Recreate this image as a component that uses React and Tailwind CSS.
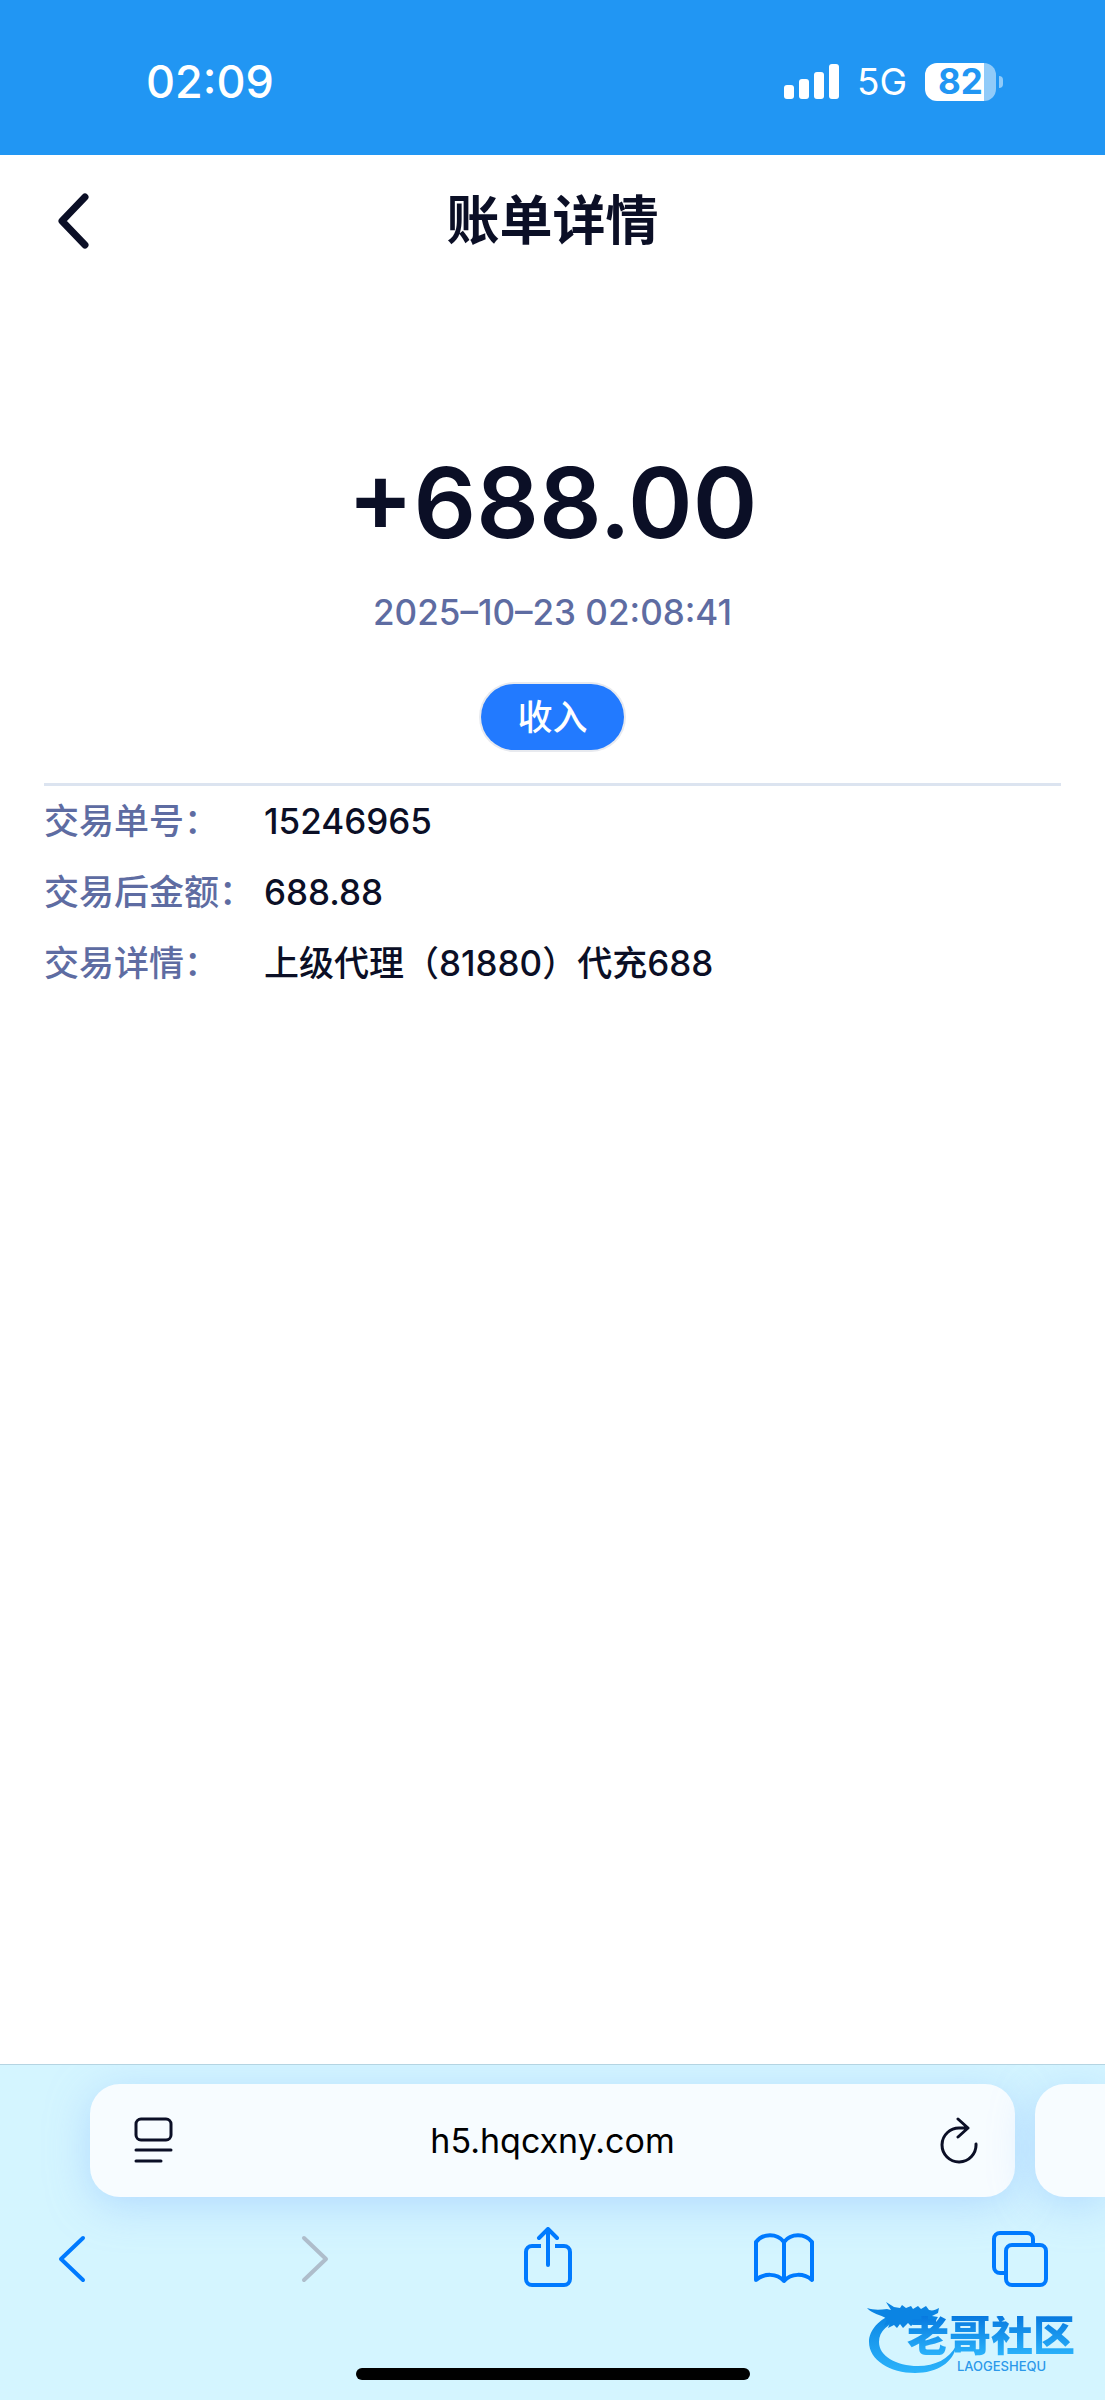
const base = 'font-["Inter","Noto_Sans_CJK_SC",sans-serif]';

const rows = [
  { label: "交易单号：", value: "15246965" },
  { label: "交易后金额：", value: "688.88" },
  { label: "交易详情：", value: "上级代理（81880）代充688" },
];

function StatusBar() {
  return (
    <div className="flex h-[155px] items-center justify-between bg-[#2196f3] pt-2 pr-[102px] pl-[146px] text-white">
      <time className="text-[45px] leading-none font-medium">02:09</time>
      <div className="flex items-center">
        <svg className="h-9 w-14" viewBox="0 0 56 36" fill="currentColor" aria-label="信号">
          <rect x="1" y="21" width="10" height="14" rx="3" />
          <rect x="16" y="15" width="10" height="20" rx="3" />
          <rect x="31" y="8" width="10" height="27" rx="3" />
          <rect x="46" y="0" width="10" height="35" rx="3" />
        </svg>
        <span className="ml-[18px] text-[37px] leading-none">5G</span>
        <div className="ml-[18px] flex items-center gap-[3px]">
          <div className="flex h-[38px] w-[71px] items-center justify-center rounded-xl bg-linear-to-r from-white from-83% to-[#90cbf9] to-83% text-[35px] leading-none font-bold text-[#2196f3]">
            82
          </div>
          <div className="h-3 w-1 rounded-r-full bg-[#90cbf9]" />
        </div>
      </div>
    </div>
  );
}

function Logo() {
  return (
    <div className="absolute right-4 bottom-6 flex h-[76px] w-[222px] flex-col">
      <svg className="absolute inset-0 h-full w-full" viewBox="0 0 222 76" aria-hidden="true">
        <defs>
          <linearGradient id="ring" x1="0" y1="0" x2="0" y2="1">
            <stop offset="0" stopColor="#0b84e3" />
            <stop offset="1" stopColor="#2bb3fb" />
          </linearGradient>
        </defs>
        <path fill="url(#ring)" d="M28 13C12 19 2 30 2 42c0 18 21 31 46 31 22 0 39-11 41-27-7 13-21 20-38 20-22 0-39-10-39-24 0-11 9-19 24-23z" />
        <path fill="#0b84e3" d="M0 8c6 2 12 2 20 1l4 1-5-8 8 5 6 1 2-3 4 3 5-2 2 3 5-3 3 3 5-3 3 4c4 1 6 0 10-2l-1 5-6 3 6 1-3 5-9-2-9 1-6 5-3-3-5 5-3-4-3 4-3-3-6 3 2-5-6 3 3-7C13 14 5 14 0 8z" />
      </svg>
      <span className="relative mt-4 ml-10 bg-linear-to-b from-[#0879df] to-[#2bb3fb] bg-clip-text text-[42px] leading-[40px] font-black whitespace-nowrap text-transparent">
        老哥社区
      </span>
      <span className="relative ml-[90px] text-[13px] leading-5 font-medium text-[#2b98ea]">LAOGESHEQU</span>
    </div>
  );
}

const tool = "flex h-20 w-20 items-center justify-center text-[#007aff] disabled:text-[#aebdcb]";
const stroke = { fill: "none", stroke: "currentColor", strokeWidth: 4, strokeLinecap: "round", strokeLinejoin: "round" };

function BrowserBar() {
  return (
    <footer className="relative h-[336px] shrink-0 overflow-hidden border-t border-[#b4d4e2] bg-[#d4f5ff]">
      <div className="flex gap-5 pt-[19px] pl-[90px]">
        <div className="flex h-[113px] min-w-0 flex-1 items-center justify-between rounded-[30px] bg-[#f7fcff] pr-8 pl-10 shadow-[0_8px_40px_#9ecbffa0]">
          <button type="button" aria-label="页面设置">
            <svg className="h-12 w-12" viewBox="0 0 48 48" {...stroke} strokeWidth="3">
              <rect x="6" y="2" width="35" height="21" rx="5" />
              <path d="M6 33h35M6 44h25" />
            </svg>
          </button>
          <input
            aria-label="网址"
            defaultValue="h5.hqcxny.com"
            className="mr-2 min-w-0 flex-1 bg-transparent text-center text-[34px] leading-10 text-black outline-none"
          />
          <button type="button" aria-label="刷新">
            <svg className="h-12 w-12" viewBox="0 0 48 48" {...stroke} strokeWidth="3">
              <path d="M33 11H25A17 17 0 1 0 41 27M23 2l10 9-10 9" />
            </svg>
          </button>
        </div>
        <div className="h-[113px] w-[70px] rounded-l-[30px] bg-[#f7fcff] shadow-[0_8px_40px_#9ecbffa0]" />
      </div>
      <nav className="mt-[22px] flex justify-between pr-[46px] pl-8">
        <button type="button" aria-label="后退" className={tool}>
          <svg className="h-16 w-16" viewBox="0 0 64 64" {...stroke}><path d="M43 11 21 32l22 21" /></svg>
        </button>
        <button type="button" aria-label="前进" className={tool} disabled>
          <svg className="h-16 w-16" viewBox="0 0 64 64" {...stroke}><path d="m27 11 22 21-22 21" /></svg>
        </button>
        <button type="button" aria-label="分享" className={tool}>
          <svg className="h-16 w-16" viewBox="0 0 64 64" {...stroke}>
            <path strokeLinecap="butt" d="M27 19h-9a6 6 0 0 0-6 6v27a6 6 0 0 0 6 6h32a6 6 0 0 0 6-6V25a6 6 0 0 0-6-6h-9" />
            <path d="M34 38V2M25 11l9-9 9 9" />
          </svg>
        </button>
        <button type="button" aria-label="书签" className={tool}>
          <svg className="h-16 w-16" viewBox="0 0 64 64" {...stroke}><path d="M34 15C27 6 13 6 6 15v38c8-7 21-7 28 1 7-8 20-8 28-1V15C55 6 41 6 34 15v39" /></svg>
        </button>
        <button type="button" aria-label="标签页" className={tool}>
          <svg className="h-16 w-16" viewBox="0 0 64 64" {...stroke}><path strokeLinecap="butt" d="M18 46h-5a6 6 0 0 1-6-6V12a6 6 0 0 1 6-6h27a6 6 0 0 1 6 6v5" /><rect x="19" y="18" width="40" height="40" rx="6" /></svg>
        </button>
      </nav>
      <div className="absolute bottom-5 left-1/2 h-3 w-[394px] -translate-x-1/2 rounded-full bg-black" />
      <Logo />
    </footer>
  );
}

export default function App() {
  return (
    <div className={`${base} flex min-h-screen flex-col bg-white text-[#0b0f26]`}>
      <StatusBar />
      <header className="grid h-[132px] grid-cols-[1fr_auto_1fr] items-center px-12">
        <button type="button" aria-label="返回" className="justify-self-start">
          <svg className="h-16 w-12" viewBox="0 0 48 64" {...stroke} strokeWidth="7"><path d="M37 8 14 32l23 24" /></svg>
        </button>
        <h1 className="text-[53px] leading-none font-bold">账单详情</h1>
      </header>
      <main className="flex flex-1 flex-col items-center px-11">
        <strong className="mt-[160px] text-[98px] leading-[112px] font-semibold">+688.00</strong>
        <time className="mt-[34px] text-[35px] leading-[38px] font-medium text-[#5e6ca2]">2025–10–23 02:08:41</time>
        <span className="mt-[53px] flex h-[66px] w-[143px] items-center justify-center rounded-full bg-[#227aff] text-[35px] leading-none font-medium text-white shadow-[0_0_0_2px_#e8eaef]">收入</span>
        <dl className="mt-[33px] w-full border-t-[3px] border-[#dce4f0] text-[35px] leading-[71px] font-medium">
          {rows.map((r) => (
            <div className="flex" key={r.label}>
              <dt className="w-[220px] shrink-0 whitespace-nowrap text-[#5e6ca2]">{r.label}</dt>
              <dd>{r.value}</dd>
            </div>
          ))}
        </dl>
      </main>
      <BrowserBar />
    </div>
  );
}
